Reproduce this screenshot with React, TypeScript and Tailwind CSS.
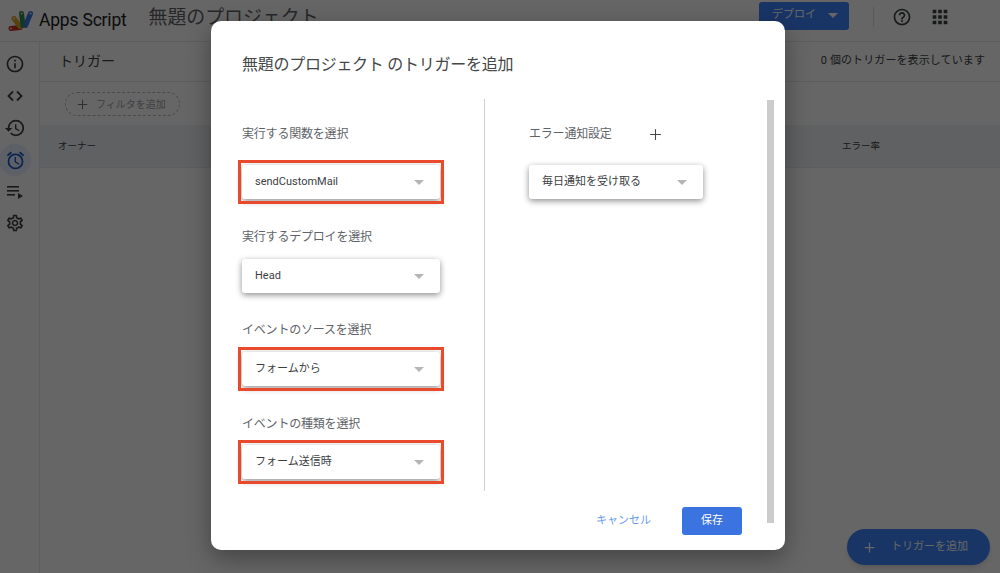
import { MdInfoOutline, MdHistory, MdOutlineAlarm, MdOutlineSettings, MdHelpOutline, MdApps } from 'react-icons/md';
import { Plus } from 'lucide-react';

const fontStack = 'font-["Roboto","Noto_Sans_CJK_JP",sans-serif]';

function Logo() {
  return (
    <svg width="26" height="22" viewBox="0 0 26 22" className="shrink-0 -ml-[1px]">
      <g strokeWidth="5" strokeLinecap="round" fill="none">
        <path d="M3 18.5 L12 17.5" stroke="#c5321f" />
        <path d="M6 8.5 L12 16.5" stroke="#d8a52a" />
        <path d="M13.5 3.5 L15 15.5" stroke="#2f8f4a" />
        <path d="M22.5 3.5 L17.5 15.5" stroke="#3b78e0" />
      </g>
      <g fill="#fff" opacity="0.8">
        <circle cx="3" cy="18.5" r="1" />
        <circle cx="6" cy="8.5" r="1" />
        <circle cx="13.5" cy="3.5" r="1" />
        <circle cx="22.5" cy="3.5" r="1" />
      </g>
    </svg>
  );
}

function SidebarIcons() {
  return (
    <div className="w-10 shrink-0 border-r border-[#e8e8e8] pt-[6px] flex flex-col text-[#3c4043]">
      <div className="h-8 w-[30px] flex items-center justify-center">
        <MdInfoOutline size={20} />
      </div>
      <div className="h-8 w-[30px] flex items-center justify-center">
        <svg width="18" height="18" viewBox="0 0 18 18" fill="none" stroke="currentColor" strokeWidth="1.8">
          <path d="M7 4.5 L2.5 9 L7 13.5" />
          <path d="M11 4.5 L15.5 9 L11 13.5" />
        </svg>
      </div>
      <div className="h-8 w-[30px] flex items-center justify-center">
        <MdHistory size={22} />
      </div>
      <div className="h-8 w-8 -ml-[1px] rounded-full bg-[#e8f0fe] flex items-center justify-center text-[#1a56c4]">
        <MdOutlineAlarm size={21} />
      </div>
      <div className="h-[31px] w-[30px] flex items-center justify-center">
        <svg width="18" height="18" viewBox="0 0 18 18" fill="currentColor">
          <rect x="1" y="3" width="12" height="1.6" />
          <rect x="1" y="7" width="12" height="1.6" />
          <rect x="1" y="11" width="8" height="1.6" />
          <path d="M12 10 L17 13 L12 16 Z" />
        </svg>
      </div>
      <div className="h-8 w-[30px] flex items-center justify-center">
        <MdOutlineSettings size={20} />
      </div>
    </div>
  );
}

function Caret({ className }: { className?: string }) {
  return <span className={`w-0 h-0 border-x-[5px] border-x-transparent border-t-[5px] ${className ?? 'border-t-[#b5b5b5]'}`} />;
}

function Select({ value, width = 'w-[198px]', caretGap = 'pr-4' }: { value: string; width?: string; caretGap?: string }) {
  return (
    <div className={`${width} h-[34px] rounded-[3px] bg-white shadow-[0_2px_6px_rgba(0,0,0,0.45)] flex items-center justify-between pl-[13px] ${caretGap} text-[11px] text-[#3c4043]`}>
      <span>{value}</span>
      <Caret />
    </div>
  );
}

function Field({ label, value, marked, gap = 'mb-[13px]', mb }: { label: string; value: string; marked?: boolean; gap?: string; mb: string }) {
  return (
    <div className={mb}>
      <div className={`h-[18px] leading-[18px] text-[12px] tracking-[-0.2px] text-[#5f6368] ${gap}`}>{label}</div>
      {/* red box is an annotation on top of the select */}
      <div className="relative w-[198px]">
        <Select value={value} />
        {marked && <div className="absolute -left-1 -right-1 -top-[5px] -bottom-[5px] border-[3px] border-[#ea4a2c] pointer-events-none" />}
      </div>
    </div>
  );
}

function TriggerDialog() {
  return (
    <div className="absolute left-[211px] top-[21px] w-[574px] h-[529px] bg-white rounded-[10px] shadow-[0_8px_24px_rgba(0,0,0,0.35)] pl-[31px] flex flex-col">
      <h2 className="h-[84px] pt-[33px] leading-[22px] text-[16px] tracking-[-0.27px] text-[#444746] font-normal">無題のプロジェクト のトリガーを追加</h2>
      <div className="flex h-[392px] -mt-[6px]">
        <div className="w-[243px] border-r border-[#cfcfcf] pt-[26px]">
          <Field label="実行する関数を選択" value="sendCustomMail" marked gap="mb-[22px]" mb="mb-[29px]" />
          <Field label="実行するデプロイを選択" value="Head" mb="mb-[28px]" />
          <Field label="イベントのソースを選択" value="フォームから" marked mb="mb-[29px]" />
          <Field label="イベントの種類を選択" value="フォーム送信時" marked gap="mb-[12px]" mb="" />
        </div>
        <div className="pl-[44px] pt-[26px] w-[282px]">
          <div className="h-[18px] mb-[22px] flex items-center text-[12px] tracking-[-0.2px] text-[#5f6368]">
            <span className="w-[118px]">エラー通知設定</span>
            <Plus size={17} strokeWidth={1.5} className="text-[#444]" />
          </div>
          <Select value="毎日通知を受け取る" width="w-[174px]" caretGap="pr-[16px]" />
        </div>
        <div className="w-[7px] h-[423px] bg-[#cccccc] mt-[1px]" />
      </div>
      <div className="flex items-center justify-end pr-[43px] gap-[31px] mt-[16px]">
        <span className="text-[11px] text-[#6a9bea]">キャンセル</span>
        <button className="w-[60px] h-[28px] rounded-[3px] bg-[#3b73e0] text-white text-[11px]">保存</button>
      </div>
    </div>
  );
}

export default function App() {
  return (
    <div className={`relative w-[1000px] h-[573px] overflow-hidden bg-white ${fontStack}`}>
      <header className="h-[42px] border-b border-[#e8e8e8] flex items-center pl-[9px] pr-[49px]">
        <Logo />
        <span className="ml-[5px] text-[17.5px] text-[#202124] tracking-[-0.2px]">Apps Script</span>
        <span className="ml-[22px] -mt-[5px] text-[18.9px] text-[#5f6368]">無題のプロジェクト</span>
        <div className="ml-auto flex items-center">
          <div className="w-[90px] h-[28px] -mt-[10px] rounded-[3px] bg-[#3f85ff] flex items-center pl-[13px] gap-[12px] text-white text-[11px]">
            <span>デプロイ</span>
            <Caret className="border-t-white" />
          </div>
          <div className="w-px h-[20px] bg-[#ddd] ml-[24px] -mt-[8px]" />
          <MdHelpOutline size={20} className="ml-[18px] -mt-[8px] text-[#3c4043]" />
          <MdApps size={22} className="ml-[17px] -mt-[8px] text-[#3c4043]" />
        </div>
      </header>
      <div className="flex h-[531px]">
        <SidebarIcons />
        <main className="flex-1 flex flex-col">
          <div className="h-[40px] border-b border-[#e8e8e8] flex items-center justify-between pl-[19px] pr-[15px]">
            <span className="text-[14px] text-[#3c4043]">トリガー</span>
            <span className="text-[11px] tracking-[0.1px] text-[#3c4043]">0 個のトリガーを表示しています</span>
          </div>
          <div className="h-[43px] flex items-center pl-[25px]">
            <div className="w-[115px] h-[24px] mt-[1px] rounded-full border border-dashed border-[#bbb] flex items-center pl-[9px] gap-[6px] text-[10px] text-[#9aa0a6]">
              <Plus size={15} strokeWidth={1.6} className="text-[#777]" />
              <span>フィルタを追加</span>
            </div>
          </div>
          <div className="h-[43px] pt-[1px] bg-[#f1f3f4] border-b border-[#e8e8e8] flex items-center justify-between pl-[18px] pr-[120px] text-[9.5px] text-[#3c4043]">
            <span>オーナー</span>
            <span>エラー率</span>
          </div>
        </main>
      </div>
      <div className="absolute right-[10px] bottom-[8px] w-[143px] h-[36px] rounded-full bg-[#3f85ff] shadow-md flex items-center pl-[15px] gap-[14px] text-white text-[11px]">
        <Plus size={15} strokeWidth={2} />
        <span>トリガーを追加</span>
      </div>
      <div className="absolute inset-0 bg-black/60" />
      <TriggerDialog />
    </div>
  );
}
